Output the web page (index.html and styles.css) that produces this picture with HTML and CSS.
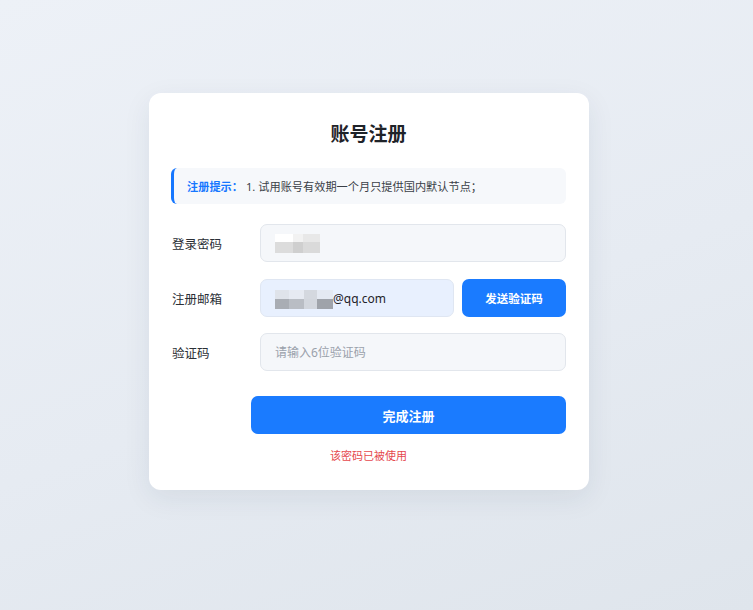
FILE: index.html
```html
<!DOCTYPE html>
<html lang="zh-CN">
<head>
  <meta charset="UTF-8" />
  <meta name="viewport" content="width=device-width, initial-scale=1.0" />
  <title>账号注册</title>
  <link rel="stylesheet" href="styles.css">
</head>
<body>
  <div class="register-card">
    <h2 class="register-title">账号注册</h2>

    <div class="register-tip">
      <span class="tip-label">注册提示：</span>
      <span class="tip-text">1. 试用账号有效期一个月只提供国内默认节点；</span>
    </div>

    <div class="form-row">
      <label class="form-label">登录密码</label>
      <div class="form-input">
        <span class="mosaic mosaic-pwd">
          <i class="m1"></i><i class="m2"></i><i class="m3"></i>
          <i class="m4"></i><i class="m5"></i><i class="m6"></i>
        </span>
      </div>
    </div>

    <div class="form-row row-mail">
      <label class="form-label">注册邮箱</label>
      <div class="form-input filled">
        <span class="mosaic mosaic-mail">
          <i class="m1"></i><i class="m2"></i><i class="m3"></i><i class="m4"></i>
          <i class="m5"></i><i class="m6"></i><i class="m7"></i><i class="m8"></i>
        </span>
        <span class="input-value">@qq.com</span>
      </div>
      <button class="btn btn-code">发送验证码</button>
    </div>

    <div class="form-row">
      <label class="form-label">验证码</label>
      <div class="form-input">
        <span class="placeholder">请输入6位验证码</span>
      </div>
    </div>

    <div class="form-actions">
      <button class="btn btn-submit">完成注册</button>
    </div>
    <p class="form-error">该密码已被使用</p>
  </div>
</body>
</html>
```

FILE: styles.css
```css
* {
  box-sizing: border-box;
  margin: 0;
  padding: 0;
}

html, body {
  width: 100%;
  min-height: 100vh;
  font-family: "Noto Sans", "Noto Sans CJK SC", sans-serif;
  background: linear-gradient(160deg, #edf1f7 0%, #e6ebf2 55%, #dfe5ec 100%);
  overflow: hidden;
}

body {
  padding: 93px 15px 0 0;
  display: flex;
  justify-content: center;
  align-items: flex-start;
}

.register-card {
  width: 440px;
  background: #fff;
  border-radius: 12px;
  box-shadow: 0 8px 28px rgba(30, 50, 80, 0.08);
  padding: 26px 23px 26px 22px;
}

.register-title {
  text-align: center;
  font-size: 19px;
  font-weight: 700;
  color: #1f2329;
  line-height: 30px;
  margin-bottom: 19px;
}

.register-tip {
  display: flex;
  align-items: center;
  height: 36px;
  background: #f6f8fb;
  border-left: 3px solid #1677ff;
  border-radius: 6px;
  padding-left: 13px;
  font-size: 11.2px;
  margin-bottom: 20px;
}

.tip-label {
  color: #1677ff;
  font-weight: 700;
  margin-right: 3px;
}

.tip-text {
  color: #3a3f47;
}

.form-row {
  display: flex;
  align-items: center;
  margin-bottom: 17px;
}

.form-row.row-mail {
  margin-bottom: 16px;
}

.form-label {
  width: 89px;
  flex-shrink: 0;
  padding-left: 1px;
  font-size: 12.5px;
  color: #2b2f36;
}

.form-input {
  flex: 1;
  height: 38px;
  display: flex;
  align-items: center;
  padding: 0 14px;
  background: #f5f7fa;
  border: 1px solid #e2e6ec;
  border-radius: 7px;
  font-size: 12px;
}

.form-input.filled {
  background: #e8f0fe;
  border-color: #dfe6f2;
}

.input-value {
  color: #1f2329;
}

.placeholder {
  color: #9aa1ab;
}

.mosaic {
  display: grid;
  grid-auto-flow: row;
}

.mosaic i {
  display: block;
}

.mosaic-pwd {
  grid-template-columns: 18px 10px 17px;
  grid-template-rows: 8px 11px;
  margin-top: 1px;
}

.mosaic-pwd .m1 { background: #fff; }
.mosaic-pwd .m2 { background: #f2f2f2; }
.mosaic-pwd .m3 { background: #e8e8e8; }
.mosaic-pwd .m4 { background: #dcdcdc; }
.mosaic-pwd .m5 { background: #cfcfcf; }
.mosaic-pwd .m6 { background: #dadada; }

.mosaic-mail {
  grid-template-columns: 14px 15px 13px 16px;
  grid-template-rows: 9px 10px;
  margin-top: 2px;
}

.mosaic-mail .m1 { background: #dfe3ea; }
.mosaic-mail .m2 { background: #e6eaf2; }
.mosaic-mail .m3 { background: #d4d8df; }
.mosaic-mail .m4 { background: #e4e9f2; }
.mosaic-mail .m5 { background: #a9adb4; }
.mosaic-mail .m6 { background: #b9bdc4; }
.mosaic-mail .m7 { background: #d2d6dd; }
.mosaic-mail .m8 { background: #9fa3aa; }

.btn {
  border: none;
  background: #1a7bff;
  color: #fff;
  font-family: inherit;
  font-weight: 700;
  cursor: pointer;
  border-radius: 7px;
}

.btn-code {
  width: 104px;
  height: 38px;
  margin-left: 8px;
  font-size: 11.5px;
}

.form-actions {
  margin-top: 25px;
  padding-left: 80px;
}

.btn-submit {
  width: 100%;
  height: 38px;
  font-size: 13px;
}

.form-error {
  margin-top: 13px;
  text-align: center;
  font-size: 11px;
  color: #e5484d;
  line-height: 17px;
}
```
